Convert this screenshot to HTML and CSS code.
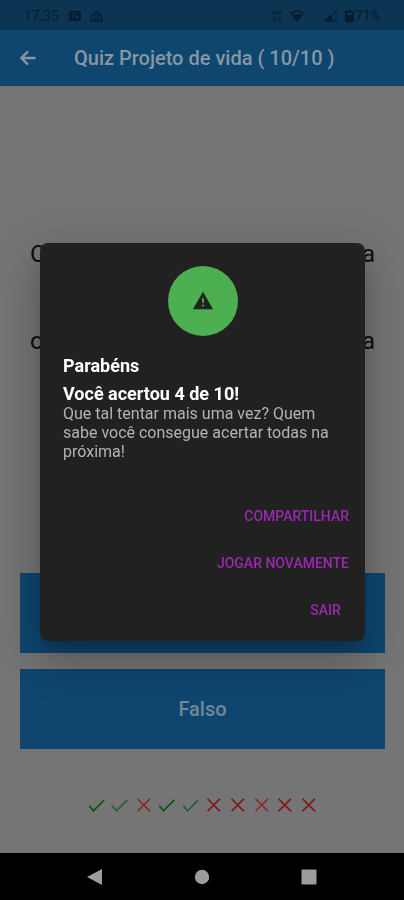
FILE: index.html
```html
<!DOCTYPE html>
<html lang="pt-BR">
<head>
<meta charset="utf-8">
<meta name="viewport" content="width=device-width, initial-scale=1">
<title>Quiz Projeto de vida</title>
<link rel="stylesheet" href="styles.css">
</head>
<body>
<svg class="symbols" aria-hidden="true">
  <symbol id="check" viewBox="0 0 24 24"><path d="M3 13l5 6L21 6" fill="none" stroke="currentColor" stroke-width="2"/></symbol>
  <symbol id="cross" viewBox="0 0 24 24"><path d="M4.500 4.500l15 15M19.500 4.500l-15 15" fill="none" stroke="currentColor" stroke-width="2"/></symbol>
</svg>
<div class="status">
  <span>17:35</span>
  <svg class="status-news" viewBox="0 0 12 12"><path fill="currentColor" fill-rule="evenodd" d="M0 1h12v10H0zM2 3v1h5V3zM3 5v4h1V5zM6 5v3h3V5z"/></svg>
  <svg class="status-home" viewBox="0 0 14 14"><path d="M3 6a4 4 0 0 1 8 0M1 12l1-5 5-3 5 3 1 5zM5 12V9l2-1 2 1v3" fill="none" stroke="currentColor" stroke-width="1.300"/></svg>
  <span class="status-space"></span>
  <svg class="status-net" viewBox="0 0 12 12"><path d="M1 5V1l2 3V1M5 1v4M5 1h2v2H5M9 1v4M9 1h2M9 3h2M2 7h3l-3 4h3M7 7h3v2H7v2h3" fill="none" stroke="currentColor"/></svg>
  <svg class="status-wifi" viewBox="0 0 14 12"><path d="M1 3q6-4 12 0L7 11z" fill="none" stroke="currentColor" stroke-width="1.300"/><path d="M3 5q4-2 8 0l-4 6z" fill="currentColor"/></svg>
  <svg class="status-signal" viewBox="0 0 13 12"><path d="M12 1v10H1z" fill="none" stroke="currentColor"/><path d="M8 4v7H0z" fill="currentColor"/></svg>
  <svg class="status-battery" viewBox="0 0 9 12"><path fill="currentColor" fill-rule="evenodd" d="M3 0h3v1h3v11H0V1h3zM2 3v2h5V3z"/></svg>
  <span>71%</span>
</div>
<header class="bar">
  <button class="back" type="button" aria-label="Voltar"><svg viewBox="0 0 24 24"><path d="M21 12H5M12 4l-8 8 8 8" fill="none" stroke="currentColor" stroke-width="2.800"/></svg></button>
  <h1>Quiz Projeto de vida ( 10/10 )</h1>
</header>
<main class="quiz">
  <div class="question">
    <p><span>O</span><span>a</span></p>
    <p></p>
    <p></p>
    <p><span>o</span><span>a</span></p>
  </div>
  <div class="answers">
    <button type="button" aria-label="Verdadeiro"></button>
    <button type="button">Falso</button>
  </div>
  <div class="score">
    <svg class="right"><use href="#check"/></svg>
    <svg class="right soft"><use href="#check"/></svg>
    <svg class="wrong soft"><use href="#cross"/></svg>
    <svg class="right"><use href="#check"/></svg>
    <svg class="right soft"><use href="#check"/></svg>
    <svg class="wrong"><use href="#cross"/></svg>
    <svg class="wrong"><use href="#cross"/></svg>
    <svg class="wrong soft"><use href="#cross"/></svg>
    <svg class="wrong"><use href="#cross"/></svg>
    <svg class="wrong"><use href="#cross"/></svg>
  </div>
</main>
<nav class="system">
  <button type="button" aria-label="Voltar ao app anterior"><svg viewBox="0 0 16 16"><path d="M15 0v16L0 8z" fill="currentColor"/></svg></button>
  <button type="button" aria-label="Início"><svg viewBox="0 0 16 16"><circle cx="8" cy="8" r="7.200" fill="currentColor"/></svg></button>
  <button type="button" aria-label="Recentes"><svg viewBox="0 0 16 16"><rect x=".500" y=".500" width="15" height="15" rx="1" fill="currentColor"/></svg></button>
</nav>
<div class="overlay">
  <section class="dialog" role="dialog" aria-modal="true" aria-labelledby="dialog-title">
    <div class="badge"><svg viewBox="0 0 24 24"><path fill="currentColor" fill-rule="evenodd" d="M12 2l11 19H1zM11 9v5h2V9zM11 16v2h2v-2z"/></svg></div>
    <h2 id="dialog-title">Parabéns</h2>
    <h3>Você acertou 4 de 10!</h3>
    <p>Que tal tentar mais uma vez? Quem sabe você consegue acertar todas na próxima!</p>
    <div class="actions">
      <button type="button">COMPARTILHAR</button>
      <button type="button">JOGAR NOVAMENTE</button>
      <button type="button">SAIR</button>
    </div>
  </section>
</div>
</body>
</html>
```
FILE: styles.css
```css
* { box-sizing: border-box; }
body {
  margin: 0;
  min-height: 100vh;
  display: flex;
  flex-direction: column;
  background: #757575;
  font-family: Roboto, "Liberation Sans", sans-serif;
}
h1, h2, h3, p { margin: 0; }
button { border: 0; padding: 0; background: none; color: inherit; font: inherit; }
svg { display: block; flex: none; }
.symbols { position: absolute; width: 0; height: 0; }

.status {
  display: flex;
  align-items: center;
  height: 30px;
  padding: 2px 23px 0 24px;
  background: #0c3554;
  color: #071c2e;
  font-size: 14px;
}
.status-news { width: 12px; height: 12px; margin-left: 10px; }
.status-home { width: 13px; height: 13px; margin-left: 9px; }
.status-space { flex: 1; }
.status-net { width: 12px; height: 12px; opacity: 0.7; }
.status-wifi { width: 14px; height: 12px; margin-left: 7px; }
.status-signal { width: 13px; height: 12px; margin-left: 20px; }
.status-battery { width: 9px; height: 12px; margin: 0 1px 0 8px; }

.bar {
  display: flex;
  align-items: center;
  height: 56px;
  padding-left: 18px;
  background: #0e4670;
  color: #8796a3;
}
.back { width: 20px; height: 20px; }
.back svg { width: 20px; height: 20px; }
.bar h1 { margin-left: 36px; font-size: 20px; font-weight: 500; }

.quiz {
  flex: 1;
  display: flex;
  flex-direction: column;
  padding: 154px 19px 38px 20px;
}
.question { padding: 0 10px; color: #0d0d0d; font-size: 24px; line-height: 29px; }
.question p { display: flex; justify-content: space-between; height: 29px; }
.answers {
  flex: 1;
  display: flex;
  flex-direction: column;
  justify-content: flex-end;
  gap: 16px;
}
.answers button {
  height: 80px;
  background: #0e4670;
  color: #728797;
  font-size: 20px;
  font-weight: 500;
}
.score { display: flex; width: 236px; margin: 46px auto 0; }
.score svg { flex: 1; width: 20px; height: 20px; }
.right { color: #09520d; }
.right.soft { color: #265d30; }
.wrong { color: #831313; }
.wrong.soft { color: #8b2828; }

.system {
  display: flex;
  justify-content: center;
  align-items: center;
  gap: 91px;
  height: 47px;
  background: #000;
  color: #9c9c9c;
}
.system svg { width: 16px; height: 16px; }

.overlay {
  position: fixed;
  inset: 30px 0 46px;
  display: flex;
  align-items: center;
  padding: 0 39px 0 40px;
}
.dialog {
  flex: 1;
  padding: 23px 23px 8px;
  border-radius: 8px;
  background: #212121;
  color: #fff;
  box-shadow: 0 11px 15px -7px rgba(0, 0, 0, 0.2), 0 24px 38px 3px rgba(0, 0, 0, 0.14), 0 9px 46px 8px rgba(0, 0, 0, 0.12);
}
.badge {
  display: grid;
  place-items: center;
  width: 70px;
  height: 70px;
  margin: 0 auto 20px;
  border-radius: 50%;
  background: #4caf50;
  color: #212121;
}
.badge svg { width: 22px; height: 22px; }
.dialog h2, .dialog h3 { font-size: 18px; font-weight: 700; line-height: 20px; }
.dialog h3 { margin-top: 8px; }
.dialog p { color: #b3b3b3; font-size: 16px; line-height: 19px; }
.actions {
  display: flex;
  flex-direction: column;
  align-items: flex-end;
  margin: 31px -7px 0 0;
}
.actions button {
  min-width: 47px;
  height: 47px;
  color: #9c27b0;
  font-size: 14px;
  font-weight: 500;
}
```
